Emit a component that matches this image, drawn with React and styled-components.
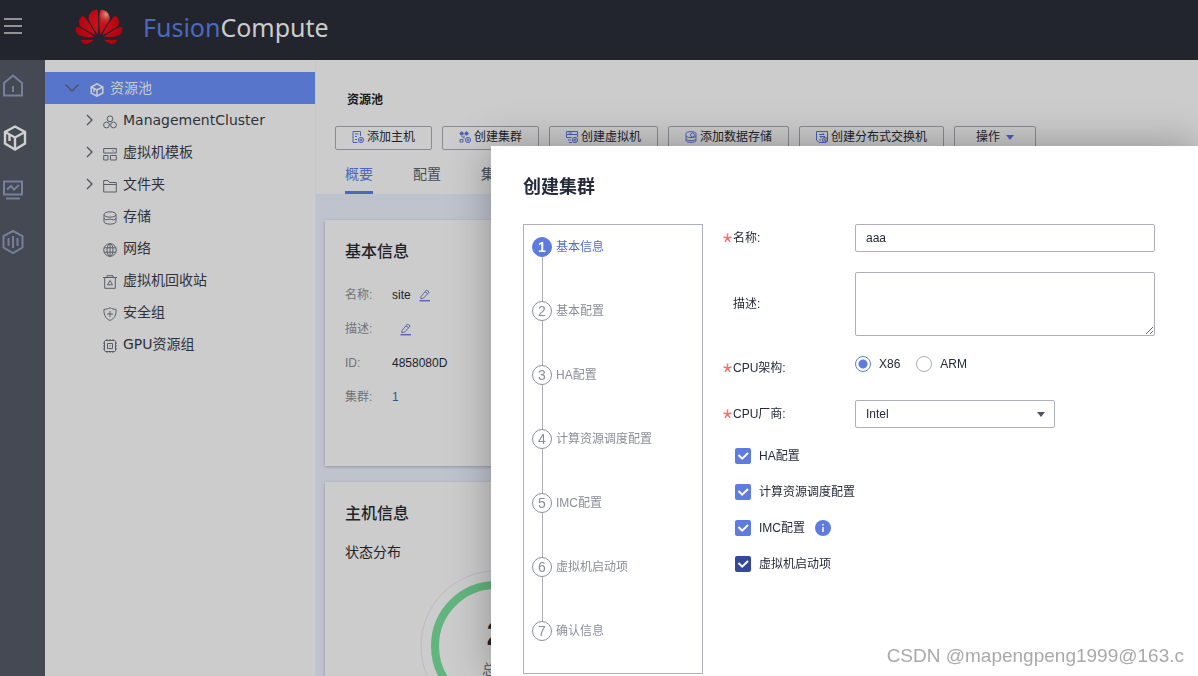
import React, { useState } from 'react';
import styled, { createGlobalStyle } from 'styled-components';

const GlobalStyle = createGlobalStyle`
* { box-sizing: border-box; }
body {
  margin: 0;
  font-family: "Liberation Sans", "Noto Sans CJK SC", sans-serif;
  font-size: 12px;
  color: #252b3a;
}
button, input, select, textarea { font: inherit; color: inherit; }
`;

const Page = styled.div`
display:flex;
flex-direction:column;
height:100vh;
overflow:hidden;
background:#ccc;
`;

const Header = styled.header`
display:flex;
flex:none;
align-items:center;
height:60px;
padding-bottom:6px;
background:#22252d;
`;
const MenuButton = styled.button`
display:flex;
align-items:center;
width:75px;
height:50px;
padding:0 0 2px 4px;
border:0;
background:none;
color:#929396;
`;
const Brand = styled.div`
display:flex;
align-items:center;
gap:20px;
color:#ccc;
font-family:"Noto Sans", sans-serif;
font-size:25px;
line-height:36px;
& span { color:#4c69bd; }
`;

const Body = styled.div`
display:flex;
flex:1;
min-height:0;
`;
const Rail = styled.nav`
display:flex;
flex:none;
flex-direction:column;
width:45px;
background:#454954;
`;
const RailLink = styled.a`
display:flex;
align-items:center;
height:52px;
color:${(props) => (props.$active ? '#d0d0d0' : '#76809b')};
`;

const Tree = styled.nav`
flex:none;
width:270px;
padding-top:12px;
font-family:"DejaVu Sans", "Noto Sans CJK SC", sans-serif;
font-size:14px;
`;
const TreeRow = styled.a`
display:flex;
align-items:center;
gap:6px;
height:32px;
padding-left:${(props) => (props.$root ? '20px' : '33px')};
background:${(props) => (props.$root ? '#5775ca' : 'none')};
color:${(props) => (props.$root ? '#ccc' : '#2f323b')};
line-height:20px;
text-decoration:none;
white-space:nowrap;
& svg { flex:none; }
`;
const TreeIcon = styled.svg`
width:14px;
height:14px;
margin-top:3px;
color:${(props) => (props.$root ? '#ccc' : '#5a5e6a')};
`;

const Main = styled.main`
display:flex;
flex:1;
flex-direction:column;
min-width:0;
border-left:1px solid #c6c7ca;
`;
const Top = styled.div`
flex:none;
padding:30px 19px 0;
`;
const PageTitle = styled.h1`
margin:0 0 16px;
padding-left:12px;
color:#16181d;
font-size:12px;
line-height:20px;
`;
const Toolbar = styled.div`
display:flex;
gap:10px;
margin-bottom:12px;
`;
const ToolButton = styled.button`
display:flex;
flex:none;
align-items:center;
gap:${(props) => (props.$menu ? '6px' : '3px')};
height:24px;
padding:0 ${(props) => (props.$menu ? '21px' : '16px')} 2px;
border:1px solid #8a8c93;
border-radius:2px;
background:none;
color:#20232b;
line-height:20px;
white-space:nowrap;
& svg { color:#4b62b6; }
`;
const Tabs = styled.div`
display:flex;
gap:40px;
padding-left:10px;
`;
const Tab = styled.button`
height:32px;
padding:0 0 6px;
border:0;
border-bottom:3px solid ${(props) => (props.$active ? '#4d68b8' : 'transparent')};
background:none;
color:${(props) => (props.$active ? '#4d68b8' : '#4b4d53')};
font-size:14px;
line-height:20px;
`;
const Dashboard = styled.div`
display:flex;
flex:1;
flex-direction:column;
gap:16px;
padding:26px 9px 0;
background:#bfc3ce;
`;
const Card = styled.section`
flex:none;
min-height:246px;
padding:20px;
background:#ccc;
box-shadow:0 1px 3px rgba(60,65,85,.35);
color:#20232b;
`;
const CardTitle = styled.h2`
margin:0 0 16px;
font-size:16px;
font-weight:500;
line-height:24px;
`;
const Details = styled.dl`
display:grid;
grid-template-columns:47px 1fr;
row-gap:12px;
margin:0;
padding-top:4px;
line-height:22px;
& dt { color:#717378; }
& dd { display:flex; align-items:center; gap:8px; margin:0; }
`;
const EditButton = styled.button`
display:flex;
padding:0;
border:0;
background:none;
color:#6066ae;
`;
const CountLink = styled.a`
color:#2b5690;
text-decoration:none;
`;
const SubTitle = styled.h3`
margin:0;
font-size:14px;
font-weight:400;
line-height:20px;
`;
const Donut = styled.svg`
display:block;
width:152px;
height:152px;
margin:8px 0 0 75px;
`;

const Dialog = styled.div`
position:fixed;
top:146px;
right:0;
bottom:0;
left:491px;
padding:24px 32px 0;
background:#fff;
box-shadow:0 0 40px rgba(0,0,0,.3);
`;
const DialogTitle = styled.h2`
margin:0 0 20px;
font-size:18px;
line-height:34px;
`;
const DialogBody = styled.div`
display:flex;
align-items:flex-start;
gap:20px;
`;
const Steps = styled.ol`
flex:none;
width:180px;
margin:0;
padding:12px 8px 32px;
border:1px solid #adb0b8;
list-style:none;
`;
const Step = styled.li`
display:grid;
grid-template-columns:20px 1fr;
column-gap:4px;
color:${(props) => (props.$active ? '#526ecc' : '#8a8e99')};
line-height:20px;
&:not(:last-child)::after {
  content:"";
  width:1px;
  height:44px;
  margin-left:10px;
  background:#adb0b8;
}
`;
const StepNumber = styled.span`
height:20px;
border:1px solid ${(props) => (props.$active ? '#5e7ce0' : '#8a8e99')};
border-radius:50%;
background:${(props) => (props.$active ? '#5e7ce0' : '#fff')};
color:${(props) => (props.$active ? '#fff' : '#8a8e99')};
font-size:14px;
font-weight:${(props) => (props.$active ? 'bold' : 'normal')};
line-height:18px;
text-align:center;
`;

const Form = styled.form`
display:flex;
flex:1;
flex-direction:column;
gap:20px;
`;
const Field = styled.div`
display:flex;
align-items:center;
min-height:24px;
`;
const FieldLabel = styled.label`
display:flex;
flex:none;
align-items:center;
width:132px;
line-height:20px;
& svg { color:#f66f6a; }
& span { padding-left:10px; }
& svg + span { padding-left:1px; }
`;
const TextInput = styled.input`
width:300px;
height:28px;
padding:0 10px;
border:1px solid #adb0b8;
border-radius:2px;
outline:0;
`;
const TextArea = styled.textarea`
display:block;
width:300px;
height:64px;
padding:6px 10px;
border:1px solid #adb0b8;
border-radius:2px;
outline:0;
`;
const SelectBox = styled.div`
position:relative;
width:200px;
& select {
  appearance:none;
  width:100%;
  height:28px;
  padding:0 10px;
  border:1px solid #adb0b8;
  border-radius:2px;
  background:#fff;
  outline:0;
}
& svg {
  position:absolute;
  top:12px;
  right:10px;
  color:#4e5565;
  pointer-events:none;
}
`;
const Options = styled.div`
display:flex;
align-self:flex-start;
gap:16px;
`;
const Option = styled.label`
display:flex;
align-items:center;
gap:8px;
line-height:16px;
`;
const Radio = styled.input`
appearance:none;
width:16px;
height:16px;
margin:0;
border:1px solid #adb0b8;
border-radius:50%;
&:checked {
  border-color:#5e7ce0;
  background:radial-gradient(circle, #5e7ce0 4px, #fff 5px);
}
`;
const CheckList = styled.div`
display:flex;
flex-direction:column;
gap:20px;
padding-left:12px;
`;
const CheckRow = styled.div`
display:flex;
align-items:center;
gap:10px;
height:16px;
`;
const CheckBox = styled.span`
display:grid;
& > * { grid-area:1 / 1; }
& input {
  appearance:none;
  width:16px;
  height:16px;
  margin:0;
  border:1px solid #adb0b8;
  border-radius:2px;
}
& input:checked {
  border:0;
  background:${(props) => (props.$focused ? '#344899' : '#5e7ce0')};
}
& svg { pointer-events:none; }
`;
const Watermark = styled.div`
position:fixed;
right:14px;
bottom:8px;
color:#a9a9a9;
font-size:19px;
line-height:24px;
text-shadow:1px 1px 0 #fff;
`;

const line = { fill: 'none', stroke: 'currentColor' };

const Petals = () => (
  <g>
    <path d="M69 79C72 50 73 8 66 0C50-1 39 13 38 27C38 43 56 65 69 79Z" />
    <path d="M64 80C56 60 38 31 25 18C13 24 7 36 12 49C18 61 44 73 64 80Z" />
    <path d="M61 85C42 67 15 52 2 51C-3 60 1 74 10 79C21 86 44 85 61 85Z" />
    <path d="M60 90H14C16 101 26 107 37 105C46 102 54 96 60 90Z" />
  </g>
);

const Logo = () => (
  <svg width="48" height="36" viewBox="0 0 142 107">
    <defs>
      <radialGradient id="petal" gradientUnits="userSpaceOnUse" cx="71" cy="45" r="75">
        <stop offset="0" stopColor="#c9141c" />
        <stop offset="1" stopColor="#b0000d" />
      </radialGradient>
      <radialGradient id="shine" gradientUnits="userSpaceOnUse" cx="92" cy="16" r="34">
        <stop offset="0" stopColor="#d69684" />
        <stop offset="1" stopColor="#c4161d" stopOpacity="0" />
      </radialGradient>
    </defs>
    <g fill="url(#petal)" stroke="#22252d" strokeWidth="3">
      <Petals />
      <g transform="translate(142 0) scale(-1 1)"><Petals /></g>
    </g>
    <path fill="url(#shine)" d="M74 76C71 50 70 8 77 2C91 1 102 13 103 27C103 43 86 63 74 76Z" />
  </svg>
);

const railIcons = [
  <g key="home"><path d="M3 10L12 2.5L21 10V22.5H3Z" /><path d="M12 13v6" /></g>,
  <g key="pool" strokeWidth="2.4"><path d="M14 1.5L24 7V18.5L14 24.5L4 18.5V7Z" /><path d="M4 7L14 12.5L24 7M14 12.5V24M8.5 10v6" /></g>,
  <g key="monitor"><path d="M3 4.500H21V17.500H3Z" /><path d="M6 12.500L10 9L13 12.500L18 8M5 21.500H19" /></g>,
  <g key="hex"><path d="M12 2L21.500 7V18.500L12 24L2.500 18.500V7Z" /><path d="M7.500 9v8M12 7v12M16.500 9v8" /></g>,
];

const treeIcons = {
  cube: <g strokeWidth="1.5"><path d="M7 .8L12.800 4V10L7 13.200L1.200 10V4Z" /><path d="M1.200 4L7 7L12.800 4M7 7v6M4 6v3" /></g>,
  cluster: <g><circle cx="7" cy="3.800" r="2.900" /><circle cx="3.500" cy="10" r="2.900" /><circle cx="10.500" cy="10" r="2.900" /></g>,
  template: <g><path d="M.7 1.500H13.300V6H.7ZM.7 8.500H5V13H.7ZM7.500 8.500H13.300V13H7.500Z" /><path d="M9.500 3.800H11" /></g>,
  folder: <path d="M.7 13V1.500H5L6.500 3.500H13.300V13ZM.7 5.500H13.300" />,
  storage: <g><ellipse cx="7" cy="3.500" rx="6" ry="2.700" /><path d="M1 3.500V10.500C1 14 13 14 13 10.500V3.500M1 7C1 8.500 4 9.200 5 8.500S9 8.500 10 8.800S13 8 13 7" /></g>,
  globe: <g><circle cx="7" cy="7" r="6.300" /><ellipse cx="7" cy="7" rx="3" ry="6.300" /><path d="M7 .7V13.300M1 4.800H13M1 9.200H13" /></g>,
  trash: <g><path d="M0 2.500H14M4 2.500V.7H10V2.500M1.700 2.500V13.300H12.300V2.500" /><path d="M7 5.500L9.500 9.800H4.500Z" /></g>,
  shield: <g><path d="M7 .7C9 2 11 2.300 13 2.300C13.500 8 11 12 7 13.400C3 12 .5 8 1 2.300C3 2.300 5 2 7 .7Z" /><path d="M7 4V10M4 7H10" /></g>,
  chip: <g><rect x="1.500" y="1.500" width="11" height="11" rx="1" /><path d="M4.500 4.500H9.500V9.500H4.500ZM4 0V1M7 0V1M10 0V1M4 13V14M7 13V14M10 13V14M0 4H1M0 7H1M0 10H1M13 4H14M13 7H14M13 10H14" /><path d="M6.500 7H7.500" /></g>,
};

const treeItems = [
  { icon: 'cube', text: '资源池', root: true },
  { icon: 'cluster', text: 'ManagementCluster', open: true },
  { icon: 'template', text: '虚拟机模板', open: true },
  { icon: 'folder', text: '文件夹', open: true },
  { icon: 'storage', text: '存储' },
  { icon: 'globe', text: '网络' },
  { icon: 'trash', text: '虚拟机回收站' },
  { icon: 'shield', text: '安全组' },
  { icon: 'chip', text: 'GPU资源组' },
];

const Plus = () => <g><circle cx="9" cy="9" r="2.600" /><path d="M9 7.500v3M7.500 9h3" /></g>;

const tools = [
  { text: '添加主机', icon: <g><path d="M5.500 11.500H1V.5H8.500V5M3 3H6.500M3 5.500H5M3 8.500H5" /><Plus /></g> },
  { text: '创建集群', icon: <g><circle cx="2.700" cy="2.500" r="1.600" fill="currentColor" /><circle cx="7.500" cy="2.500" r="1.600" fill="currentColor" /><path d="M2.500 5L5 7.500M1 8.500H4V11H1ZM5 4.500V7" /><Plus /></g> },
  { text: '创建虚拟机', icon: <g><path d="M.5.500H11.500V3.500H.5ZM.5 3.500V6.500H5.500M11.500 3.500V6M2 9H5M3 11.500H6M2.500 2H6" /><Plus /></g> },
  { text: '添加数据存储', icon: <g><path d="M1 2.500C1 0 11 0 11 2.500V9.500C11 12 1 12 1 9.500ZM1 5.500C3 7 9 7 11 5.500M1 8.500C3 10 9 10 11 8.500" /><circle cx="7.500" cy="4" r="2" /></g> },
  { text: '创建分布式交换机', icon: <g><path d="M.5.500H11.500V9L9 11.500H3L.5 9ZM3 3.500H8L6.500 2M9 5.500H4L5.500 7M3 9H5" /><Plus /></g> },
];

const stepNames = ['基本信息', '基本配置', 'HA配置', '计算资源调度配置', 'IMC配置', '虚拟机启动项', '确认信息'];
const checkNames = ['HA配置', '计算资源调度配置', 'IMC配置', '虚拟机启动项'];

const Star = () => (
  <svg width="9" height="10" viewBox="0 0 9 10" {...line} strokeWidth="1.400">
    <path d="M4.500 .5V5L.5 4M4.500 5L8.500 4M4.500 5L2 8.800M4.500 5L7 8.800" />
  </svg>
);

const Caret = () => <svg width="8" height="5" viewBox="0 0 8 5"><path fill="currentColor" d="M0 0H8L4 5Z" /></svg>;

const Edit = ({ label }) => (
  <EditButton type="button" aria-label={label}>
    <svg width="12" height="13" viewBox="0 0 12 13" {...line}>
      <path d="M2 7.500L7.500 1L10.200 3L4.800 9L1.800 9.700ZM6 2.800L8.700 4.800" />
      <path d="M.5 11.700H11" strokeWidth="1.500" />
    </svg>
  </EditButton>
);

const TreeView = () => (
  <Tree>
    {treeItems.map((item) => (
      <TreeRow href="#" key={item.text} $root={item.root}>
        <svg width="19" height="16" viewBox="0 0 19 16" {...line} stroke="#4d515c" strokeWidth="1.300">
          {item.root && <path d="M.5 4.500L7 11L13.500 4.500" />}
          {item.open && <path d="M9 3L14 8L9 13" />}
        </svg>
        <TreeIcon viewBox="0 0 14 14" {...line} $root={item.root}>{treeIcons[item.icon]}</TreeIcon>
        {item.text}
      </TreeRow>
    ))}
  </Tree>
);

const Overview = () => (
  <Main>
    <Top>
      <PageTitle>资源池</PageTitle>
      <Toolbar>
        {tools.map((tool) => (
          <ToolButton key={tool.text}>
            <svg width="12" height="12" viewBox="0 0 12 12" {...line}>{tool.icon}</svg>
            {tool.text}
          </ToolButton>
        ))}
        <ToolButton $menu>操作<Caret /></ToolButton>
      </Toolbar>
      <Tabs>
        <Tab $active>概要</Tab>
        <Tab>配置</Tab>
        <Tab>集群</Tab>
      </Tabs>
    </Top>
    <Dashboard>
      <Card>
        <CardTitle>基本信息</CardTitle>
        <Details>
          <dt>名称:</dt><dd>site <Edit label="编辑名称" /></dd>
          <dt>描述:</dt><dd><span /><Edit label="编辑描述" /></dd>
          <dt>ID:</dt><dd>4858080D</dd>
          <dt>集群:</dt><dd><CountLink href="#">1</CountLink></dd>
        </Details>
      </Card>
      <Card>
        <CardTitle>主机信息</CardTitle>
        <SubTitle>状态分布</SubTitle>
        <Donut viewBox="0 0 152 152">
          <circle cx="76" cy="76" r="75" fill="none" stroke="#b9bcc6" />
          <circle cx="76" cy="76" r="61" fill="none" stroke="#63b57f" strokeWidth="8" />
          <text x="76" y="75" fontSize="34" fontWeight="bold" textAnchor="middle" fill="#20232b">2</text>
          <text x="76" y="104" fontSize="14" textAnchor="middle" fill="#5a5e6a">总数</text>
        </Donut>
      </Card>
    </Dashboard>
  </Main>
);

const CreateCluster = () => {
  const [name, setName] = useState('aaa');
  const [desc, setDesc] = useState('');
  const [arch, setArch] = useState('X86');
  const [checks, setChecks] = useState([true, true, true, true]);
  const toggle = (index) => setChecks(checks.map((on, i) => (i === index ? !on : on)));

  return (
    <Dialog role="dialog" aria-labelledby="dialog-title">
      <DialogTitle id="dialog-title">创建集群</DialogTitle>
      <DialogBody>
        <Steps>
          {stepNames.map((step, i) => (
            <Step key={step} $active={i === 0}>
              <StepNumber $active={i === 0}>{i + 1}</StepNumber>
              {step}
            </Step>
          ))}
        </Steps>
        <Form>
          <Field>
            <FieldLabel htmlFor="name"><Star /><span>名称:</span></FieldLabel>
            <TextInput id="name" value={name} onChange={(e) => setName(e.target.value)} />
          </Field>
          <Field>
            <FieldLabel htmlFor="desc"><span>描述:</span></FieldLabel>
            <TextArea id="desc" value={desc} onChange={(e) => setDesc(e.target.value)} />
          </Field>
          <Field role="radiogroup" aria-labelledby="arch">
            <FieldLabel as="div" id="arch"><Star /><span>CPU架构:</span></FieldLabel>
            <Options>
              {['X86', 'ARM'].map((value) => (
                <Option key={value}>
                  <Radio type="radio" name="arch" value={value} checked={arch === value} onChange={() => setArch(value)} />
                  {value}
                </Option>
              ))}
            </Options>
          </Field>
          <Field>
            <FieldLabel htmlFor="vendor"><Star /><span>CPU厂商:</span></FieldLabel>
            <SelectBox>
              <select id="vendor" defaultValue="Intel">
                <option>Intel</option>
              </select>
              <Caret />
            </SelectBox>
          </Field>
          <CheckList>
            {checkNames.map((text, i) => (
              <CheckRow key={text}>
                <Option>
                  <CheckBox $focused={i === 3}>
                    <input type="checkbox" checked={checks[i]} onChange={() => toggle(i)} />
                    <svg width="16" height="16" viewBox="0 0 16 16" fill="none" stroke="#fff" strokeWidth="2">
                      <path d="M3.500 7L7.200 10.700L13 5" />
                    </svg>
                  </CheckBox>
                  {text}
                </Option>
                {text === 'IMC配置' && (
                  <svg width="16" height="16" viewBox="0 0 16 16">
                    <circle cx="8" cy="8" r="8" fill="#5e7ce0" />
                    <path d="M8 4V5.500M8 7V12" stroke="#fff" strokeWidth="1.500" />
                  </svg>
                )}
              </CheckRow>
            ))}
          </CheckList>
        </Form>
      </DialogBody>
    </Dialog>
  );
};

const App = () => (
  <Page>
    <GlobalStyle />
    <Header>
      <MenuButton aria-label="菜单">
        <svg width="18" height="18" viewBox="0 0 18 18" {...line} strokeWidth="2">
          <path d="M0 2H18M0 9H18M0 16H18" />
        </svg>
      </MenuButton>
      <Brand><Logo /><div><span>Fusion</span>Compute</div></Brand>
    </Header>
    <Body>
      <Rail>
        {railIcons.map((icon, i) => (
          <RailLink href="#" key={icon.key} $active={i === 1}>
            <svg width="27" height="26" viewBox="-1 0 27 26" {...line} strokeWidth="2">{icon}</svg>
          </RailLink>
        ))}
      </Rail>
      <TreeView />
      <Overview />
    </Body>
    <CreateCluster />
    <Watermark>CSDN @mapengpeng1999@163.c</Watermark>
  </Page>
);

export default App;
